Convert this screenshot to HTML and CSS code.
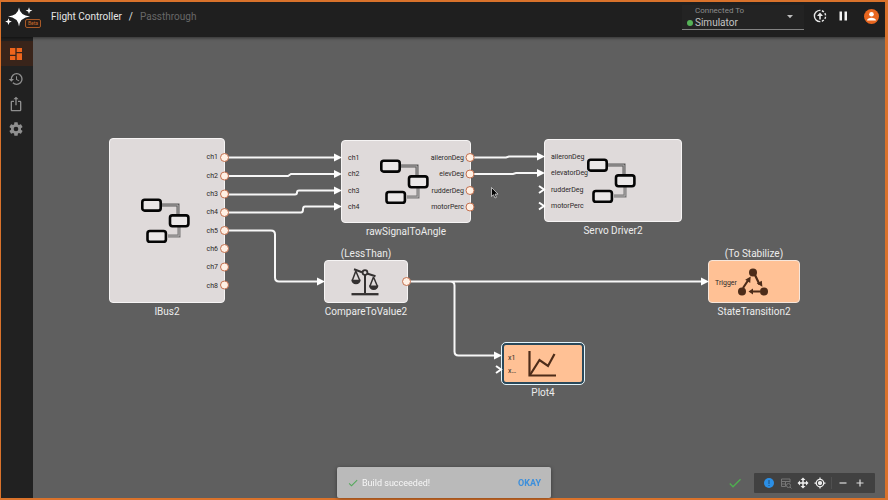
FILE: index.html
```html
<!DOCTYPE html>
<html lang="en">
<head>
<meta charset="utf-8">
<title>Flight Controller / Passthrough</title>
<link rel="stylesheet" href="styles.css">
</head>
<body>
<svg class="sprite" aria-hidden="true">
  <symbol id="subsystem" viewBox="0 0 50 46">
    <path d="M20 7H37V18" fill="none" stroke="#595757" stroke-width="3"/>
    <path d="M27 38H38V28" fill="none" stroke="#777575" stroke-width="3"/>
    <path d="M20 7H37V18M27 38H38V28" fill="none" stroke="#b3b1b1" stroke-width="1"/>
    <g fill="#ebe8e8" stroke="#050505" stroke-width="2.6">
      <rect x="0" y="1.8" width="18.400" height="10.8" rx="2.4" transform="translate(1.300)"/>
      <rect x="29" y="17.400" width="18.400" height="10.8" rx="2.4"/>
      <rect x="6.500" y="33" width="18.400" height="10.8" rx="2.4"/>
    </g>
  </symbol>
  <symbol id="check" viewBox="0 0 24 24"><path d="M21 7 9 19l-5.500-5.500 1.400-1.400L9 16.200 19.600 5.600z"/></symbol>
</svg>

<header class="topbar">
  <a class="logo" href="#" aria-label="Home">
    <svg width="36" height="22" viewBox="0 0 36 22">
      <path fill="#fff" d="M14 1.500Q15 9.500 25 10.500 15 11.500 14 20.500 13 11.500 3 10.500 13 9.500 14 1.500z"/>
      <path fill="#fff" d="M24 1.200l.9 2.500 2.500.9-2.500.9-.9 2.500-.9-2.500-2.500-.9 2.500-.9zM3.500 12.200l.9 2.500 2.500.9-2.500.9-.9 2.500-.9-2.500-2.500-.9 2.500-.9z"/>
    </svg>
    <span class="beta">Beta</span>
  </a>
  <nav class="crumbs" aria-label="Breadcrumb">
    <a href="#">Flight Controller</a><span>/</span><span class="current">Passthrough</span>
  </nav>
  <div class="target">
    <label for="target">Connected To</label>
    <span class="online"></span>
    <select id="target"><option>Simulator</option></select>
    <svg class="caret" width="8" height="4" viewBox="0 0 8 4"><path d="M1 0h6L4 3.200z" fill="#bdbdbd"/></svg>
  </div>
  <div class="actions">
    <button type="button" aria-label="Upload">
      <svg width="14" height="14" viewBox="0 0 14 14" fill="none" stroke="#e8e8e8"><circle cx="7" cy="7" r="5.600" stroke-width="1.400" stroke-dasharray="17.600 1.500 2.200 1.500 2.200 1.500 2.200 1.500 2.200 1.500" transform="rotate(90 7 7)"/><path d="M7 10.500V5" stroke-width="1.600"/><path d="M4 7l3-3.400L10 7z" fill="#e8e8e8" stroke="none"/></svg>
    </button>
    <button type="button" aria-label="Pause">
      <svg width="10" height="10" viewBox="0 0 10 10" fill="#f2f2f2"><path d="M1.500 .5h2.500v9H1.500zM6.500 .5h2.500v9H6.500z"/></svg>
    </button>
    <button type="button" class="avatar" aria-label="Account">
      <svg width="15" height="15" viewBox="0 0 15 15"><circle cx="7.500" cy="7.500" r="7.500" fill="#e8661f"/><circle cx="7.500" cy="5.200" r="2.300" fill="#fff"/><path fill="#fff" d="M3 11.600c0-2 2.500-2.900 4.500-2.900s4.500.9 4.500 2.900z"/></svg>
    </button>
  </div>
</header>

<div class="workspace">
  <nav class="sidebar" aria-label="Views">
    <a class="active" href="#" aria-label="Dashboard"><svg viewBox="0 0 24 24"><path d="M13 3v6h8V3m-8 18h8V11h-8M3 21h8v-6H3m0-2h8V3H3z"/></svg></a>
    <a href="#" aria-label="History"><svg viewBox="0 0 24 24"><path d="M13.500 8H12v5l4.280 2.540.72-1.210-3.500-2.080V8M13 3a9 9 0 0 0-9 9H1l3.960 4.030L9 12H6a7 7 0 0 1 7-7 7 7 0 0 1 7 7 7 7 0 0 1-7 7c-1.930 0-3.680-.79-4.940-2.060l-1.420 1.420A8.900 8.900 0 0 0 13 21a9 9 0 0 0 9-9 9 9 0 0 0-9-9"/></svg></a>
    <a href="#" aria-label="Export"><svg viewBox="0 0 24 24"><path d="M12 1 8 5h3v9h2V5h3m2 18H6c-1.110 0-2-.89-2-2V9a2 2 0 0 1 2-2h3v2H6v12h12V9h-3V7h3a2 2 0 0 1 2 2v12a2 2 0 0 1-2 2z"/></svg></a>
    <a href="#" aria-label="Settings"><svg viewBox="0 0 24 24"><path d="M12 15.500A3.500 3.500 0 0 1 8.500 12 3.500 3.500 0 0 1 12 8.500a3.500 3.500 0 0 1 3.500 3.500 3.500 3.500 0 0 1-3.500 3.500m7.430-2.530c.04-.32.07-.64.07-.97s-.03-.66-.07-1l2.110-1.630c.19-.15.24-.42.12-.64l-2-3.460c-.12-.22-.39-.31-.61-.22l-2.490 1c-.52-.39-1.060-.73-1.690-.98l-.37-2.650A.506.506 0 0 0 14 2h-4c-.25 0-.46.18-.5.42l-.37 2.650c-.63.25-1.170.59-1.690.98l-2.490-1c-.22-.09-.49 0-.61.22l-2 3.460c-.13.22-.07.49.12.64L4.570 11c-.04.34-.07.67-.07 1s.03.65.07.97l-2.110 1.660c-.19.15-.25.42-.12.64l2 3.460c.12.22.39.3.61.22l2.490-1.010c.52.4 1.060.74 1.690.99l.37 2.650c.04.24.25.42.5.42h4c.25 0 .46-.18.5-.42l.37-2.650c.63-.26 1.170-.59 1.690-.99l2.490 1.010c.22.08.49 0 .61-.22l2-3.460c.12-.22.07-.49-.12-.64z"/></svg></a>
  </nav>

  <main class="canvas">
    <section class="node ibus">
      <div class="body">
        <svg class="glyph" width="50" height="46"><use href="#subsystem"/></svg>
        <ul class="ports out"><li>ch1</li><li>ch2</li><li>ch3</li><li>ch4</li><li>ch5</li><li>ch6</li><li>ch7</li><li>ch8</li></ul>
      </div>
      <h2>IBus2</h2>
    </section>
    <section class="node angle">
      <div class="body">
        <svg class="glyph" width="50" height="46"><use href="#subsystem"/></svg>
        <ul class="ports in"><li>ch1</li><li>ch2</li><li>ch3</li><li>ch4</li></ul>
        <ul class="ports out"><li>aileronDeg</li><li>elevDeg</li><li>rudderDeg</li><li>motorPerc</li></ul>
      </div>
      <h2>rawSignalToAngle</h2>
    </section>
    <section class="node servo">
      <div class="body">
        <svg class="glyph" width="50" height="46"><use href="#subsystem"/></svg>
        <ul class="ports in"><li>aileronDeg</li><li>elevatorDeg</li><li>rudderDeg</li><li>motorPerc</li></ul>
      </div>
      <h2>Servo Driver2</h2>
    </section>
    <section class="node compare">
      <p>(LessThan)</p>
      <div class="body">
        <svg class="glyph" width="28" height="30" viewBox="0 0 28 30" fill="none" stroke="#343131"><path stroke-width="2" d="M3 2.200l8 3M16 6.500l8.500 2.800M14 8v18"/><circle cx="14" cy="5.600" r="2.400" stroke-width="1.800"/><path stroke-width="1.500" stroke-linejoin="round" d="M4.800 4L1.300 13.500M4.800 4l4 9.500M22.500 10l-3.700 9.500M22.500 10l4 9.500"/><path fill="#343131" stroke="none" d="M.3 12.800h9.400q-.5 4.400-4.700 4.400T.3 12.800zM18 18.600h9.400q-.5 4.400-4.700 4.400T18 18.600z"/><path stroke-width="2.300" d="M.5 27.200h27"/></svg>
        <ul class="ports out"><li></li></ul>
      </div>
      <h2>CompareToValue2</h2>
    </section>
    <section class="node peach transition">
      <p>(To Stabilize)</p>
      <div class="body">
        <svg class="glyph" width="30" height="28" viewBox="0 0 30 28"><g fill="#4d2c19"><circle cx="15" cy="4.500" r="4"/><circle cx="4" cy="23.500" r="4"/><circle cx="26" cy="23.500" r="4"/><path d="M12.700 8.500l-.5 6.500-5-3.200zM24.400 18.800l-5.600-3.200 5-2.800zM10.500 23.500l4.500-3v6z"/></g><path d="M5 20l6-9M17 7l4.500 9.500M22 23.500h-9" stroke="#4d2c19" stroke-width="2.200"/></svg>
        <ul class="ports in"><li>Trigger</li></ul>
      </div>
      <h2>StateTransition2</h2>
    </section>
    <section class="node peach selected plot">
      <div class="body">
        <svg class="glyph" width="28" height="26" viewBox="0 0 28 26" fill="none" stroke="#4d2c19" stroke-width="2.200"><path d="M1.500 0v24.500H28"/><path d="M2 24L11.500 9l8.500 6L26.500 3"/></svg>
        <ul class="ports in"><li>x1</li><li>x…</li></ul>
      </div>
      <h2>Plot4</h2>
    </section>

    <svg class="wires" aria-hidden="true">
      <defs>
        <path id="tip" d="M-7-4L1 0-7 4z"/>
        <path id="open" d="M-5-3.500L0 0-5 3.500"/>
      </defs>
      <g transform="translate(-33 -37)">
        <g class="wire">
          <path d="M225 157.500H336"/>
          <path d="M225 176H288l3-2H336"/>
          <path d="M225 194.500H295q2 0 2-2t2-2H336"/>
          <path d="M225 212.500H301q2 0 2-3t2-3H336"/>
          <path d="M225 230.500H271q4 0 4 4V277.500q0 4 4 4H319"/>
          <path d="M470 157.500H506l3-1H539"/>
          <path d="M470 174H513l3-1H539"/>
          <path d="M407 281.500H703M450 281.500q4.500 0 4.500 4V351.500q0 4 4 4H496"/>
        </g>
        <g class="tips">
          <use href="#tip" x="341" y="157.500"/><use href="#tip" x="341" y="174"/><use href="#tip" x="341" y="190.500"/><use href="#tip" x="341" y="206.500"/>
          <use href="#tip" x="544" y="156.500"/><use href="#tip" x="544" y="173"/>
          <use href="#tip" x="324" y="281.500"/><use href="#tip" x="708" y="281.500"/><use href="#tip" x="501" y="355.500"/>
        </g>
        <g class="open">
          <use href="#open" x="544" y="189.500"/><use href="#open" x="544" y="206"/><use href="#open" x="501" y="369.500"/>
        </g>
        <g class="sockets">
          <circle cx="224.500" cy="157.500" r="4"/><circle cx="224.500" cy="176" r="4"/><circle cx="224.500" cy="194" r="4"/><circle cx="224.500" cy="212.500" r="4"/>
          <circle cx="224.500" cy="230.500" r="4"/><circle cx="224.500" cy="248.500" r="4"/><circle cx="224.500" cy="267" r="4"/><circle cx="224.500" cy="285" r="4"/>
          <circle cx="470" cy="157.500" r="4"/><circle cx="470" cy="174" r="4"/><circle cx="470" cy="190.500" r="4"/><circle cx="470" cy="207" r="4"/>
          <circle cx="406.500" cy="281.500" r="4"/>
        </g>
        <path d="M491.500 187.500v9l2-1.800 1.500 3.300 1.500-.7-1.500-3.200h3z" fill="#050505" stroke="#e8e8e8" stroke-width=".7"/>
      </g>
    </svg>

    <div class="status">
      <svg class="built" width="16" height="16" viewBox="0 0 24 24"><use href="#check"/></svg>
      <div class="tools">
        <button type="button" aria-label="Issues"><svg width="12" height="12" viewBox="0 0 24 24"><circle cx="12" cy="12" r="10" fill="#2b8fe6"/><path d="M11 6h2v8h-2zM11 16h2v2h-2z" fill="#1f4f7d"/></svg></button>
        <button type="button" aria-label="Clear grid" disabled><svg width="12" height="12" viewBox="0 0 24 24" fill="none" stroke="#777" stroke-width="2"><path d="M11 19H3V4h17v7M3 9h17M3 14h8M11 9v10"/><circle cx="17" cy="17" r="4"/><path d="M20 20l3 3"/></svg></button>
        <button type="button" aria-label="Pan"><svg width="12" height="12" viewBox="0 0 24 24" fill="#eee"><path d="M12 1l5 5h-3.500v4.500H18V7l5 5-5 5v-3.500h-4.500V18H17l-5 5-5-5h3.500v-4.500H6V17l-5-5 5-5v3.500h4.500V6H7z"/></svg></button>
        <button type="button" aria-label="Center"><svg width="12" height="12" viewBox="0 0 24 24" fill="none" stroke="#eee" stroke-width="2.500"><circle cx="12" cy="12" r="7.500"/><circle cx="12" cy="12" r="3" fill="#eee"/><path d="M12 1v4M12 19v4M1 12h4M19 12h4"/></svg></button>
        <button type="button" class="zoom" aria-label="Zoom out"><svg width="12" height="12" viewBox="0 0 12 12"><path d="M2.500 6h7" stroke="#ddd" stroke-width="1.200"/></svg></button>
        <button type="button" aria-label="Zoom in"><svg width="12" height="12" viewBox="0 0 12 12"><path d="M2.500 6h7M6 2.500v7" stroke="#ddd" stroke-width="1.200"/></svg></button>
      </div>
    </div>
  </main>
</div>

<div class="toast" role="status">
  <svg width="12" height="12" viewBox="0 0 24 24"><use href="#check"/></svg>
  <span>Build succeeded!</span>
  <button type="button">OKAY</button>
</div>
</body>
</html>
```
FILE: styles.css
```css
* { box-sizing: border-box; }

html { height: 100%; }

body {
  margin: 0;
  min-height: 100%;
  display: flex;
  flex-direction: column;
  border: solid #d9722b;
  border-width: 2px 3px 2px 1px;
  background: #5f5f5f;
  color: #e6e6e6;
  font-family: Roboto, "Liberation Sans", sans-serif;
}

.sprite { display: none; }
svg { display: block; }
a { color: inherit; text-decoration: none; }
button {
  padding: 0;
  border: 0;
  background: none;
  font: inherit;
  color: inherit;
}
h2, p, ul { margin: 0; padding: 0; font-weight: 400; list-style: none; }

.topbar {
  display: flex;
  align-items: center;
  height: 35px;
  padding-right: 6px;
  background: #1f1f1f;
  box-shadow: 0 1px 3px rgba(0, 0, 0, .5);
  z-index: 1;
}

.logo {
  position: relative;
  margin: 0 10px 0 4px;
  padding-bottom: 5px;
}

.beta {
  position: absolute;
  right: 0;
  bottom: 5px;
  padding: 1px 2px;
  border: 1px solid #a85a28;
  border-radius: 2px;
  background: #2a1d16;
  color: #c96a2c;
  font-size: 5px;
  line-height: 5px;
}

.crumbs {
  display: flex;
  gap: 7px;
  flex: 1;
  padding-bottom: 5px;
  font-size: 10px;
  line-height: 12px;
}
.crumbs .current { color: #686868; }

.target {
  display: grid;
  grid-template-columns: 13px 1fr auto;
  grid-template-rows: 11px 12px;
  align-content: end;
  align-items: center;
  width: 122px;
  height: 25px;
  margin-bottom: 5px;
  padding-right: 10px;
  border-bottom: 1px solid #828282;
  background: #232323;
}
.target label {
  grid-area: 1 / 2;
  color: #8c8c8c;
  font-size: 8px;
  line-height: 10px;
}
.target select {
  grid-area: 2 / 2;
  padding: 0;
  border: 0;
  appearance: none;
  background: none;
  color: #c4c4c4;
  font: 10px/12px Roboto, sans-serif;
}
.online {
  grid-area: 2 / 1;
  width: 6px;
  height: 6px;
  margin-left: 5px;
  border-radius: 50%;
  background: #55b257;
}
.caret { grid-area: 1 / 3 / 3 / 4; }

.actions {
  display: flex;
  align-items: center;
  gap: 11px;
  margin-left: 9px;
  padding-bottom: 7px;
}
.avatar { margin-left: 5px; }

.workspace { display: flex; flex: 1; }

.sidebar {
  width: 32px;
  padding-top: 4px;
  background: #212121;
}
.sidebar a {
  display: grid;
  place-items: center;
  height: 25px;
}
.sidebar svg { width: 16px; height: 16px; margin-right: 2px; fill: #8f8f8f; }
.sidebar .active { background: #39241a; }
.sidebar .active svg { fill: #ee651c; }

.canvas {
  position: relative;
  flex: 1;
  overflow: hidden;
}

.node {
  position: absolute;
  display: flex;
  flex-direction: column;
  align-items: center;
  color: #ececec;
  font-size: 10px;
  line-height: 12px;
  white-space: nowrap;
}
.node h2 { margin-top: 3px; font-size: 10px; }

.body {
  display: grid;
  width: 100%;
  height: 43px;
  border: 1px solid #f6f4f4;
  border-radius: 4px;
  background: #dfdada;
  color: #2b2828;
  font-size: 7px;
}
.glyph { grid-area: 1 / 1; place-self: center; margin-right: 2px; }
.ports {
  grid-area: 1 / 1;
  display: grid;
  grid-auto-rows: 1fr;
  align-items: center;
  margin: 9px 6px 7px;
  line-height: 8px;
}
.out { justify-self: end; text-align: right; }
.in { justify-self: start; }

.ibus { left: 76px; top: 101px; width: 116px; }
.ibus .body { height: 165px; }
.angle { left: 308px; top: 103px; width: 130px; }
.servo { left: 511px; top: 102px; width: 138px; }
.angle .body, .servo .body { height: 83px; }
.compare { left: 291px; top: 211px; width: 84px; }
.transition { left: 675px; top: 211px; width: 92px; }
.plot { left: 469px; top: 306px; width: 82px; }

.peach .body { background: #ffc195; border-color: #f7e6da; }
.selected .body {
  height: 41px;
  border: 2px solid #29485a;
  outline: 1px solid #e3f4fb;
}
.selected .ports { margin: 6px 4px 5px; }

.wires {
  position: absolute;
  inset: 0;
  width: 100%;
  height: 100%;
  pointer-events: none;
}
.wire { fill: none; stroke: #f7f7f7; stroke-width: 2; }
.tips { fill: #fff; }
.open { fill: none; stroke: #fff; stroke-width: 2; }
.sockets { fill: #fff0e4; stroke: #c4714f; stroke-width: 1; }

.status {
  position: absolute;
  right: 10px;
  bottom: 5px;
  display: flex;
  align-items: center;
  gap: 11px;
}
.built { fill: #4fae50; }
.tools {
  display: flex;
  align-items: center;
  gap: 5px;
  height: 20px;
  padding: 0 9px;
  border-radius: 1px;
  background: #414141;
}
.tools .zoom { padding-left: 5px; border-left: 1px solid #505050; }

.toast {
  position: fixed;
  left: 50%;
  bottom: 2px;
  transform: translateX(-50%);
  display: flex;
  align-items: center;
  gap: 3px;
  width: 214px;
  height: 31px;
  padding: 0 10px;
  border-radius: 2px;
  background: #bababa;
  box-shadow: 0 1px 4px rgba(0, 0, 0, .4);
  color: #f7f7f7;
  font-size: 9px;
  z-index: 2;
}
.toast svg { fill: #55a95c; }
.toast button { margin-left: auto; color: #3d8fdb; font-weight: 700; }
```
